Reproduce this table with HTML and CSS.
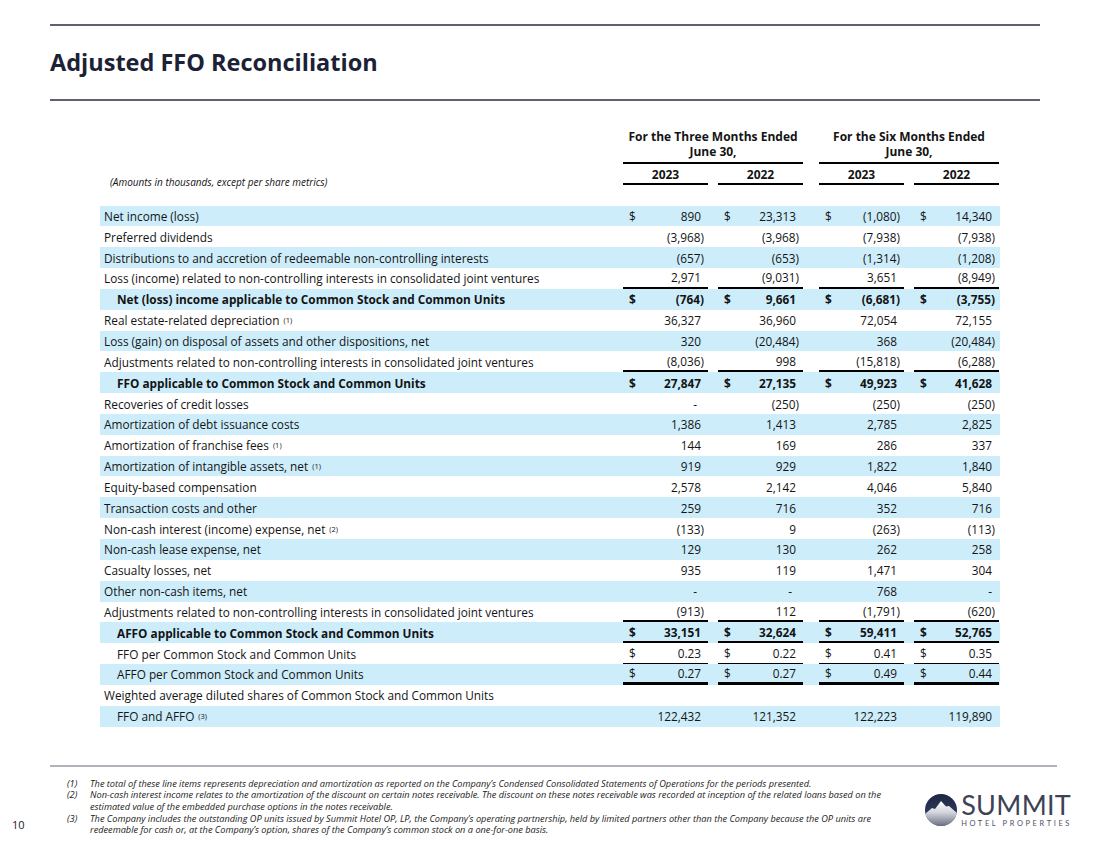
FILE: index.html
```html
<!DOCTYPE html>
<html lang="en">
<head>
<meta charset="utf-8">
<title>Adjusted FFO Reconciliation</title>
<link rel="stylesheet" href="styles.css">
</head>
<body>
<div class="slide">
  <div class="rule top"></div>
  <h1 class="title">Adjusted FFO Reconciliation</h1>
  <div class="rule"></div>

  <div class="table">
    <div class="grid hdr1">
      <div></div>
      <div class="grp g1">For the Three Months Ended<br>June 30,</div>
      <div class="grp g2">For the Six Months Ended<br>June 30,</div>
    </div>
    <div class="grid hdr2">
      <div class="note">(Amounts in thousands, except per share metrics)</div>
      <div class="yr">2023</div><div></div>
      <div class="yr">2022</div><div></div>
      <div class="yr">2023</div><div></div>
      <div class="yr">2022</div>
    </div>

    <div class="rows">
      <div class="grid row">
        <div class="lb">Net income (loss)</div>
        <div class="c"><span class="d">$</span><span>890</span></div><div></div>
        <div class="c"><span class="d">$</span><span>23,313</span></div><div></div>
        <div class="c"><span class="d">$</span><span class="ng">(1,080)</span></div><div></div>
        <div class="c"><span class="d">$</span><span>14,340</span></div>
      </div>
      <div class="grid row">
        <div class="lb">Preferred dividends</div>
        <div class="c"><span class="ng">(3,968)</span></div><div></div>
        <div class="c"><span class="ng">(3,968)</span></div><div></div>
        <div class="c"><span class="ng">(7,938)</span></div><div></div>
        <div class="c"><span class="ng">(7,938)</span></div>
      </div>
      <div class="grid row">
        <div class="lb">Distributions to and accretion of redeemable non-controlling interests</div>
        <div class="c"><span class="ng">(657)</span></div><div></div>
        <div class="c"><span class="ng">(653)</span></div><div></div>
        <div class="c"><span class="ng">(1,314)</span></div><div></div>
        <div class="c"><span class="ng">(1,208)</span></div>
      </div>
      <div class="grid row">
        <div class="lb">Loss (income) related to non-controlling interests in consolidated joint ventures</div>
        <div class="c bb"><span>2,971</span></div><div></div>
        <div class="c bb"><span class="ng">(9,031)</span></div><div></div>
        <div class="c bb"><span>3,651</span></div><div></div>
        <div class="c bb"><span class="ng">(8,949)</span></div>
      </div>
      <div class="grid row bold">
        <div class="lb ind">Net (loss) income applicable to Common Stock and Common Units</div>
        <div class="c"><span class="d">$</span><span class="ng">(764)</span></div><div></div>
        <div class="c"><span class="d">$</span><span>9,661</span></div><div></div>
        <div class="c"><span class="d">$</span><span class="ng">(6,681)</span></div><div></div>
        <div class="c"><span class="d">$</span><span class="ng">(3,755)</span></div>
      </div>
      <div class="grid row">
        <div class="lb">Real estate-related depreciation <sup>(1)</sup></div>
        <div class="c"><span>36,327</span></div><div></div>
        <div class="c"><span>36,960</span></div><div></div>
        <div class="c"><span>72,054</span></div><div></div>
        <div class="c"><span>72,155</span></div>
      </div>
      <div class="grid row">
        <div class="lb">Loss (gain) on disposal of assets and other dispositions, net</div>
        <div class="c"><span>320</span></div><div></div>
        <div class="c"><span class="ng">(20,484)</span></div><div></div>
        <div class="c"><span>368</span></div><div></div>
        <div class="c"><span class="ng">(20,484)</span></div>
      </div>
      <div class="grid row">
        <div class="lb">Adjustments related to non-controlling interests in consolidated joint ventures</div>
        <div class="c bb"><span class="ng">(8,036)</span></div><div></div>
        <div class="c bb"><span>998</span></div><div></div>
        <div class="c bb"><span class="ng">(15,818)</span></div><div></div>
        <div class="c bb"><span class="ng">(6,288)</span></div>
      </div>
      <div class="grid row bold">
        <div class="lb ind">FFO applicable to Common Stock and Common Units</div>
        <div class="c"><span class="d">$</span><span>27,847</span></div><div></div>
        <div class="c"><span class="d">$</span><span>27,135</span></div><div></div>
        <div class="c"><span class="d">$</span><span>49,923</span></div><div></div>
        <div class="c"><span class="d">$</span><span>41,628</span></div>
      </div>
      <div class="grid row">
        <div class="lb">Recoveries of credit losses</div>
        <div class="c"><span class="z">-</span></div><div></div>
        <div class="c"><span class="ng">(250)</span></div><div></div>
        <div class="c"><span class="ng">(250)</span></div><div></div>
        <div class="c"><span class="ng">(250)</span></div>
      </div>
      <div class="grid row">
        <div class="lb">Amortization of debt issuance costs</div>
        <div class="c"><span>1,386</span></div><div></div>
        <div class="c"><span>1,413</span></div><div></div>
        <div class="c"><span>2,785</span></div><div></div>
        <div class="c"><span>2,825</span></div>
      </div>
      <div class="grid row">
        <div class="lb">Amortization of franchise fees <sup>(1)</sup></div>
        <div class="c"><span>144</span></div><div></div>
        <div class="c"><span>169</span></div><div></div>
        <div class="c"><span>286</span></div><div></div>
        <div class="c"><span>337</span></div>
      </div>
      <div class="grid row">
        <div class="lb">Amortization of intangible assets, net <sup>(1)</sup></div>
        <div class="c"><span>919</span></div><div></div>
        <div class="c"><span>929</span></div><div></div>
        <div class="c"><span>1,822</span></div><div></div>
        <div class="c"><span>1,840</span></div>
      </div>
      <div class="grid row">
        <div class="lb">Equity-based compensation</div>
        <div class="c"><span>2,578</span></div><div></div>
        <div class="c"><span>2,142</span></div><div></div>
        <div class="c"><span>4,046</span></div><div></div>
        <div class="c"><span>5,840</span></div>
      </div>
      <div class="grid row">
        <div class="lb">Transaction costs and other</div>
        <div class="c"><span>259</span></div><div></div>
        <div class="c"><span>716</span></div><div></div>
        <div class="c"><span>352</span></div><div></div>
        <div class="c"><span>716</span></div>
      </div>
      <div class="grid row">
        <div class="lb">Non-cash interest (income) expense, net <sup>(2)</sup></div>
        <div class="c"><span class="ng">(133)</span></div><div></div>
        <div class="c"><span>9</span></div><div></div>
        <div class="c"><span class="ng">(263)</span></div><div></div>
        <div class="c"><span class="ng">(113)</span></div>
      </div>
      <div class="grid row">
        <div class="lb">Non-cash lease expense, net</div>
        <div class="c"><span>129</span></div><div></div>
        <div class="c"><span>130</span></div><div></div>
        <div class="c"><span>262</span></div><div></div>
        <div class="c"><span>258</span></div>
      </div>
      <div class="grid row">
        <div class="lb">Casualty losses, net</div>
        <div class="c"><span>935</span></div><div></div>
        <div class="c"><span>119</span></div><div></div>
        <div class="c"><span>1,471</span></div><div></div>
        <div class="c"><span>304</span></div>
      </div>
      <div class="grid row">
        <div class="lb">Other non-cash items, net</div>
        <div class="c"><span class="z">-</span></div><div></div>
        <div class="c"><span class="z">-</span></div><div></div>
        <div class="c"><span>768</span></div><div></div>
        <div class="c"><span>-</span></div>
      </div>
      <div class="grid row">
        <div class="lb">Adjustments related to non-controlling interests in consolidated joint ventures</div>
        <div class="c bb"><span class="ng">(913)</span></div><div></div>
        <div class="c bb"><span>112</span></div><div></div>
        <div class="c bb"><span class="ng">(1,791)</span></div><div></div>
        <div class="c bb"><span class="ng">(620)</span></div>
      </div>
      <div class="grid row bold">
        <div class="lb ind">AFFO applicable to Common Stock and Common Units</div>
        <div class="c bb"><span class="d">$</span><span>33,151</span></div><div></div>
        <div class="c bb"><span class="d">$</span><span>32,624</span></div><div></div>
        <div class="c bb"><span class="d">$</span><span>59,411</span></div><div></div>
        <div class="c bb"><span class="d">$</span><span>52,765</span></div>
      </div>
      <div class="grid row">
        <div class="lb ind">FFO per Common Stock and Common Units</div>
        <div class="c bt"><span class="d">$</span><span>0.23</span></div><div></div>
        <div class="c bt"><span class="d">$</span><span>0.22</span></div><div></div>
        <div class="c bt"><span class="d">$</span><span>0.41</span></div><div></div>
        <div class="c bt"><span class="d">$</span><span>0.35</span></div>
      </div>
      <div class="grid row">
        <div class="lb ind">AFFO per Common Stock and Common Units</div>
        <div class="c bk"><span class="d">$</span><span>0.27</span></div><div></div>
        <div class="c bk"><span class="d">$</span><span>0.27</span></div><div></div>
        <div class="c bk"><span class="d">$</span><span>0.49</span></div><div></div>
        <div class="c bk"><span class="d">$</span><span>0.44</span></div>
      </div>
      <div class="grid row">
        <div class="lb">Weighted average diluted shares of Common Stock and Common Units</div>
      </div>
      <div class="grid row">
        <div class="lb ind">FFO and AFFO <sup>(3)</sup></div>
        <div class="c"><span>122,432</span></div><div></div>
        <div class="c"><span>121,352</span></div><div></div>
        <div class="c"><span>122,223</span></div><div></div>
        <div class="c"><span>119,890</span></div>
      </div>
    </div>
  </div>

  <div class="foot-rule"></div>
  <div class="footer">
    <div class="pg">10</div>
    <div class="notes">
      <div class="fn"><span class="fnum">(1)</span><span>The total of these line items represents depreciation and amortization as reported on the Company’s Condensed Consolidated Statements of Operations for the periods presented.</span></div>
      <div class="fn"><span class="fnum">(2)</span><span>Non-cash interest income relates to the amortization of the discount on certain notes receivable. The discount on these notes receivable was recorded at inception of the related loans based on the<br>estimated value of the embedded purchase options in the notes receivable.</span></div>
      <div class="fn"><span class="fnum">(3)</span><span>The Company includes the outstanding OP units issued by Summit Hotel OP, LP, the Company’s operating partnership, held by limited partners other than the Company because the OP units are<br>redeemable for cash or, at the Company’s option, shares of the Company’s common stock on a one-for-one basis.</span></div>
    </div>
    <div class="logo">
      <svg class="mark" width="32" height="32" viewBox="0 0 32 32" aria-hidden="true">
        <defs>
          <linearGradient id="sky" x1="0" y1="0" x2="0" y2="1">
            <stop offset="0" stop-color="#1d2644"/>
            <stop offset="1" stop-color="#3b4566"/>
          </linearGradient>
          <linearGradient id="mt" x1="0" y1="0" x2="0" y2="1">
            <stop offset="0" stop-color="#ffffff"/>
            <stop offset="0.45" stop-color="#d4d6dd"/>
            <stop offset="1" stop-color="#6a7081"/>
          </linearGradient>
          <clipPath id="cc"><circle cx="16" cy="16" r="16"/></clipPath>
        </defs>
        <circle cx="16" cy="16" r="16" fill="url(#sky)"/>
        <path clip-path="url(#cc)" d="M0 20 L7 14 L10 15 L16 7 L21 12.5 L24 12 L32 19 L32 32 L0 32 Z" fill="url(#mt)"/>
      </svg>
      <div class="wm">
        <div class="wm-big">SUMMIT</div>
        <div class="wm-small">HOTEL PROPERTIES</div>
      </div>
    </div>
  </div>
</div>
</body>
</html>
```

FILE: styles.css
```css
* { box-sizing: border-box; }

body {
  margin: 0;
  background: #ffffff;
  font-family: "Open Sans", "Noto Sans", "DejaVu Sans", sans-serif;
  color: #141414;
}

.slide {
  width: 1100px;
  height: 849px;
  overflow: hidden;
}

.rule {
  margin-left: 50px;
  width: 990px;
  height: 2px;
  background: #5f626d;
}

.rule.top { margin-top: 24px; }

.title {
  margin: 0;
  padding-left: 50px;
  height: 73px;
  line-height: 73px;
  font-size: 23.5px;
  font-weight: 700;
  color: #1c2135;
}

.table {
  margin-left: 100px;
  width: 900px;
  margin-top: 27.5px;
}

.grid {
  display: grid;
  grid-template-columns: 523px 85px 10px 85px 16px 85px 10px 85px 1px;
}

.grp {
  text-align: center;
  font-weight: 700;
  font-size: 12px;
  line-height: 15px;
  padding-bottom: 3.5px;
  border-bottom: 2px solid #000;
}

.g1 { grid-column: 2 / span 3; }
.g2 { grid-column: 6 / span 3; }

.yr {
  text-align: center;
  font-weight: 700;
  font-size: 12px;
  line-height: 15px;
  padding-top: 2.5px;
  padding-bottom: 1.5px;
  border-bottom: 2px solid #000;
}

.note {
  align-self: end;
  padding-left: 10px;
  margin-bottom: -4px;
  font-style: italic;
  font-size: 10px;
  line-height: 13px;
}

.rows { margin-top: 20.5px; }

.row {
  height: 20.85px;
  font-size: 11.8px;
}

.row:nth-child(odd) { background: #cdedfb; }

.row.bold { font-weight: 700; }

.lb {
  display: flex;
  align-items: center;
  padding-left: 4px;
  white-space: nowrap;
}

.lb.ind { padding-left: 17px; }

.lb sup {
  font-size: 7.5px;
  line-height: 0;
  vertical-align: 6px;
  margin-left: 4px;
}

.c {
  display: flex;
  align-items: center;
  justify-content: flex-end;
  padding: 0 7px 0 6px;
  white-space: nowrap;
}

.c .d { margin-right: auto; }
.c .ng { margin-right: -3px; }
.c .z { margin-right: 4px; }

.bb { border-bottom: 2px solid #000; }
.bt { border-bottom: 1.5px solid #000; }
.bk { border-bottom: 3px solid #000; }

.foot-rule {
  margin-top: 38px;
  margin-left: 50px;
  width: 1007px;
  height: 2px;
  background: #b2b4bb;
}

.footer {
  display: flex;
  align-items: flex-start;
  margin-top: 11px;
}

.pg {
  width: 50px;
  padding-left: 12px;
  padding-top: 40px;
  font-size: 11px;
  line-height: 14px;
  color: #1a1a1a;
}

.notes {
  margin-left: 17px;
  font-style: italic;
  font-size: 9.2px;
  line-height: 11.7px;
  color: #1a1a1a;
}

.fn {
  display: grid;
  grid-template-columns: 23px auto;
  white-space: nowrap;
}

.logo {
  margin-left: auto;
  margin-right: 28px;
  padding-top: 15px;
  display: flex;
  align-items: center;
  gap: 4px;
}

.mark { display: block; }

.wm {
  display: flex;
  flex-direction: column;
  align-items: flex-start;
}

.wm-big {
  font-family: "Lato", "Open Sans", sans-serif;
  font-size: 27px;
  line-height: 24px;
  height: 24px;
  letter-spacing: 0.3px;
  color: #3d4357;
}

.wm-small {
  margin-top: 2px;
  font-family: "Lato", "Open Sans", sans-serif;
  font-size: 7.5px;
  line-height: 9px;
  letter-spacing: 2.6px;
  color: #4d5263;
}
```
